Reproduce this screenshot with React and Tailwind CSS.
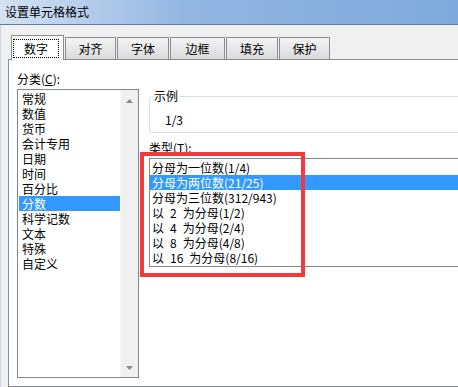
import React from 'react';

const categories = ['常规', '数值', '货币', '会计专用', '日期', '时间', '百分比', '分数', '科学记数', '文本', '特殊', '自定义'];

// en spaces keep the wide half-width gaps of the original
const types = [
  '分母为一位数(1/4)',
  '分母为两位数(21/25)',
  '分母为三位数(312/943)',
  '以\u20022\u2002为分母(1/2)',
  '以\u20024\u2002为分母(2/4)',
  '以\u20028\u2002为分母(4/8)',
  '以\u200216\u2002为分母(8/16)'
];

const tabs = [
  { label: '对齐', w: 'w-[51px]' },
  { label: '字体', w: 'w-[52px]' },
  { label: '边框', w: 'w-[55px]' },
  { label: '填充', w: 'w-[52px]' },
  { label: '保护', w: 'w-[51px]' }
];

const Tab = ({ label, w }) => (
  <div className={`${w} ml-[1px] h-[22px] border-t border-l border-r border-[#898c95] bg-gradient-to-b from-[#f4f4f4] to-[#dadada] flex items-center justify-center leading-[15px]`}>
    {label}
  </div>
);

const ScrollArrow = ({ down }) => (
  <svg width="7" height="4" viewBox="0 0 7 4">
    <polygon points={down ? '0,0 7,0 3.5,4' : '3.5,0 7,4 0,4'} fill="#8a8a8a" />
  </svg>
);

const App = () => {
  return (
    <div className="relative w-[458px] h-[387px] overflow-hidden bg-[#f0f0f0] text-[12px] text-black font-['Noto_Sans_CJK_SC','Noto_Sans',sans-serif]">
      {/* title bar */}
      <div className="h-[25px] border-b border-[#5b7ea8] bg-gradient-to-r from-[#d3e2f3] via-[#93b6e2] via-40% to-[#7fa9dc] pl-[5px] flex items-center leading-none">
        设置单元格格式
      </div>

      <div className="flex h-[362px]">
        {/* window frame */}
        <div className="w-[4px] bg-[#7fa9dc] border-r border-[#c9d6e6]" />

        <div className="flex-1 pl-[7px] pt-[10px] flex flex-col">
          {/* tabs */}
          <div className="flex items-end h-[24px] pl-[3px]">
            <div className="relative z-10 w-[53px] h-[25px] -mb-[1px] border-t border-l border-r border-[#898c95] bg-white pl-[1px] pt-[3px]">
              <span className="block w-[46px] border border-dotted border-black px-[10px] py-[1px] leading-[15px] text-center">数字</span>
            </div>
            {tabs.map((t) => (
              <Tab key={t.label} label={t.label} w={t.w} />
            ))}
          </div>

          {/* tab panel */}
          <div className="flex-1 w-[500px] border border-[#898c95] bg-white flex pl-[8px] pt-[11px]">
            {/* category column */}
            <div className="flex flex-col">
              <div className="h-[15px] leading-[15px]">分类(<span className="underline">C</span>):</div>
              <div className="mt-[3px] w-[122px] h-[289px] border border-[#828790] flex">
                <div className="flex-1 pl-[1px] pt-[1px]">
                  {categories.map((c) => (
                    <div
                      key={c}
                      className={`h-[15px] leading-[15px] pl-[3px] ${c === '分数' ? 'bg-[#3399ff] text-white' : ''}`}
                    >
                      {c}
                    </div>
                  ))}
                </div>
                <div className="w-[18px] bg-[#f0f0f0] border-l border-[#f8f8f8] flex flex-col items-center justify-between pt-[9px] pb-[7px]">
                  <ScrollArrow />
                  <ScrollArrow down />
                </div>
              </div>
            </div>

            {/* right column */}
            <div className="ml-[10px] flex flex-col">
              <div className="relative mt-[25px] w-[320px] h-[37px] border border-[#d5dfe5] rounded-[3px] pl-[15px] pt-[15px] leading-[15px]">
                <span className="absolute -top-[9px] left-[3px] bg-white px-[1px] leading-[15px]">示例</span>
                1/3
              </div>
              <div className="mt-[7px] h-[15px] leading-[15px]">类型(<span className="underline">T</span>):</div>
              <div className="mt-[3px] w-[320px] h-[109px] border border-[#828790] pt-[1px]">
                {types.map((t, i) => (
                  <div
                    key={t}
                    className={`h-[15px] leading-[15px] pl-[2px] whitespace-pre ${i === 1 ? 'bg-[#3399ff] text-white' : ''}`}
                  >
                    {t}
                  </div>
                ))}
              </div>
            </div>
          </div>
        </div>
      </div>

      {/* red annotation */}
      <div className="absolute left-[140px] top-[152px] w-[165px] h-[125px] border-[4px] border-[#f23a3c]" />
    </div>
  );
};

export default App;
